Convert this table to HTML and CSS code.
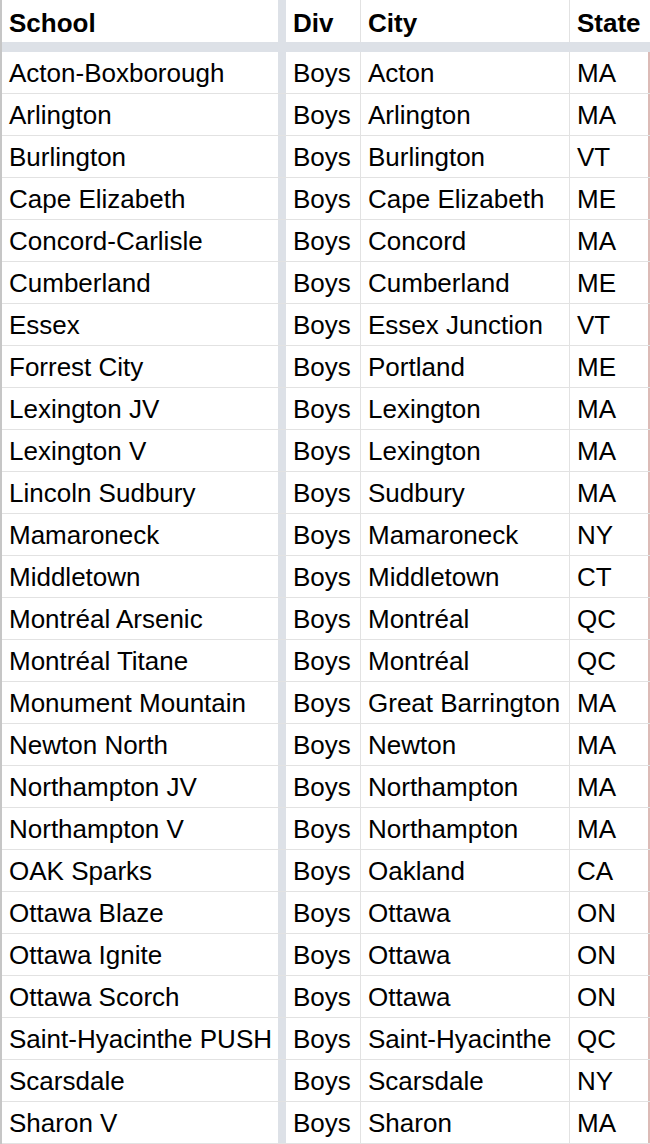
FILE: index.html
```html
<!DOCTYPE html>
<html>
<head>
<meta charset="utf-8">
<link rel="stylesheet" href="styles.css">
</head>
<body>
<div class="sheet">
  <div class="row head">
    <div class="c school">School</div><div class="freeze"></div><div class="c div">Div</div><div class="c city">City</div><div class="c state">State</div>
  </div>
  <div class="band"></div>
  <div class="row"><div class="c school">Acton-Boxborough</div><div class="freeze"></div><div class="c div">Boys</div><div class="c city">Acton</div><div class="c state">MA</div></div>
  <div class="row"><div class="c school">Arlington</div><div class="freeze"></div><div class="c div">Boys</div><div class="c city">Arlington</div><div class="c state">MA</div></div>
  <div class="row"><div class="c school">Burlington</div><div class="freeze"></div><div class="c div">Boys</div><div class="c city">Burlington</div><div class="c state">VT</div></div>
  <div class="row"><div class="c school">Cape Elizabeth</div><div class="freeze"></div><div class="c div">Boys</div><div class="c city">Cape Elizabeth</div><div class="c state">ME</div></div>
  <div class="row"><div class="c school">Concord-Carlisle</div><div class="freeze"></div><div class="c div">Boys</div><div class="c city">Concord</div><div class="c state">MA</div></div>
  <div class="row"><div class="c school">Cumberland</div><div class="freeze"></div><div class="c div">Boys</div><div class="c city">Cumberland</div><div class="c state">ME</div></div>
  <div class="row"><div class="c school">Essex</div><div class="freeze"></div><div class="c div">Boys</div><div class="c city">Essex Junction</div><div class="c state">VT</div></div>
  <div class="row"><div class="c school">Forrest City</div><div class="freeze"></div><div class="c div">Boys</div><div class="c city">Portland</div><div class="c state">ME</div></div>
  <div class="row"><div class="c school">Lexington JV</div><div class="freeze"></div><div class="c div">Boys</div><div class="c city">Lexington</div><div class="c state">MA</div></div>
  <div class="row"><div class="c school">Lexington V</div><div class="freeze"></div><div class="c div">Boys</div><div class="c city">Lexington</div><div class="c state">MA</div></div>
  <div class="row"><div class="c school">Lincoln Sudbury</div><div class="freeze"></div><div class="c div">Boys</div><div class="c city">Sudbury</div><div class="c state">MA</div></div>
  <div class="row"><div class="c school">Mamaroneck</div><div class="freeze"></div><div class="c div">Boys</div><div class="c city">Mamaroneck</div><div class="c state">NY</div></div>
  <div class="row"><div class="c school">Middletown</div><div class="freeze"></div><div class="c div">Boys</div><div class="c city">Middletown</div><div class="c state">CT</div></div>
  <div class="row"><div class="c school">Montréal Arsenic</div><div class="freeze"></div><div class="c div">Boys</div><div class="c city">Montréal</div><div class="c state">QC</div></div>
  <div class="row"><div class="c school">Montréal Titane</div><div class="freeze"></div><div class="c div">Boys</div><div class="c city">Montréal</div><div class="c state">QC</div></div>
  <div class="row"><div class="c school">Monument Mountain</div><div class="freeze"></div><div class="c div">Boys</div><div class="c city">Great Barrington</div><div class="c state">MA</div></div>
  <div class="row"><div class="c school">Newton North</div><div class="freeze"></div><div class="c div">Boys</div><div class="c city">Newton</div><div class="c state">MA</div></div>
  <div class="row"><div class="c school">Northampton JV</div><div class="freeze"></div><div class="c div">Boys</div><div class="c city">Northampton</div><div class="c state">MA</div></div>
  <div class="row"><div class="c school">Northampton V</div><div class="freeze"></div><div class="c div">Boys</div><div class="c city">Northampton</div><div class="c state">MA</div></div>
  <div class="row"><div class="c school">OAK Sparks</div><div class="freeze"></div><div class="c div">Boys</div><div class="c city">Oakland</div><div class="c state">CA</div></div>
  <div class="row"><div class="c school">Ottawa Blaze</div><div class="freeze"></div><div class="c div">Boys</div><div class="c city">Ottawa</div><div class="c state">ON</div></div>
  <div class="row"><div class="c school">Ottawa Ignite</div><div class="freeze"></div><div class="c div">Boys</div><div class="c city">Ottawa</div><div class="c state">ON</div></div>
  <div class="row"><div class="c school">Ottawa Scorch</div><div class="freeze"></div><div class="c div">Boys</div><div class="c city">Ottawa</div><div class="c state">ON</div></div>
  <div class="row"><div class="c school">Saint-Hyacinthe PUSH</div><div class="freeze"></div><div class="c div">Boys</div><div class="c city">Saint-Hyacinthe</div><div class="c state">QC</div></div>
  <div class="row"><div class="c school">Scarsdale</div><div class="freeze"></div><div class="c div">Boys</div><div class="c city">Scarsdale</div><div class="c state">NY</div></div>
  <div class="row"><div class="c school">Sharon V</div><div class="freeze"></div><div class="c div">Boys</div><div class="c city">Sharon</div><div class="c state">MA</div></div>
</div>
</body>
</html>
```
FILE: styles.css
```css
html, body {
  margin: 0;
  padding: 0;
  background: #ffffff;
}
body {
  width: 650px;
  height: 1144px;
  overflow: hidden;
  font-family: "Liberation Sans", Arial, sans-serif;
  font-size: 26px;
  color: #000000;
}
.sheet {
  border-left: 2px solid #c6c6c6;
  width: 648px;
}
.row {
  display: grid;
  grid-template-columns: 276px 8px 75px 209px 80px;
  height: 42px;
  box-sizing: border-box;
  border-bottom: 1px solid #e2e2e2;
}
.head {
  border-bottom: none;
  font-weight: bold;
}
.head .c {
  padding-top: 4px;
}
.band {
  height: 10px;
  background: #dde1e7;
}
.c {
  display: flex;
  align-items: center;
  padding-left: 7px;
  padding-top: 2px;
  white-space: nowrap;
  overflow: hidden;
  box-sizing: border-box;
}
.freeze {
  background: #dde1e7;
}
.div, .city {
  border-right: 1px solid #e2e2e2;
}
.row:not(.head) .state {
  border-right: 2px solid #dcbab6;
}
```
